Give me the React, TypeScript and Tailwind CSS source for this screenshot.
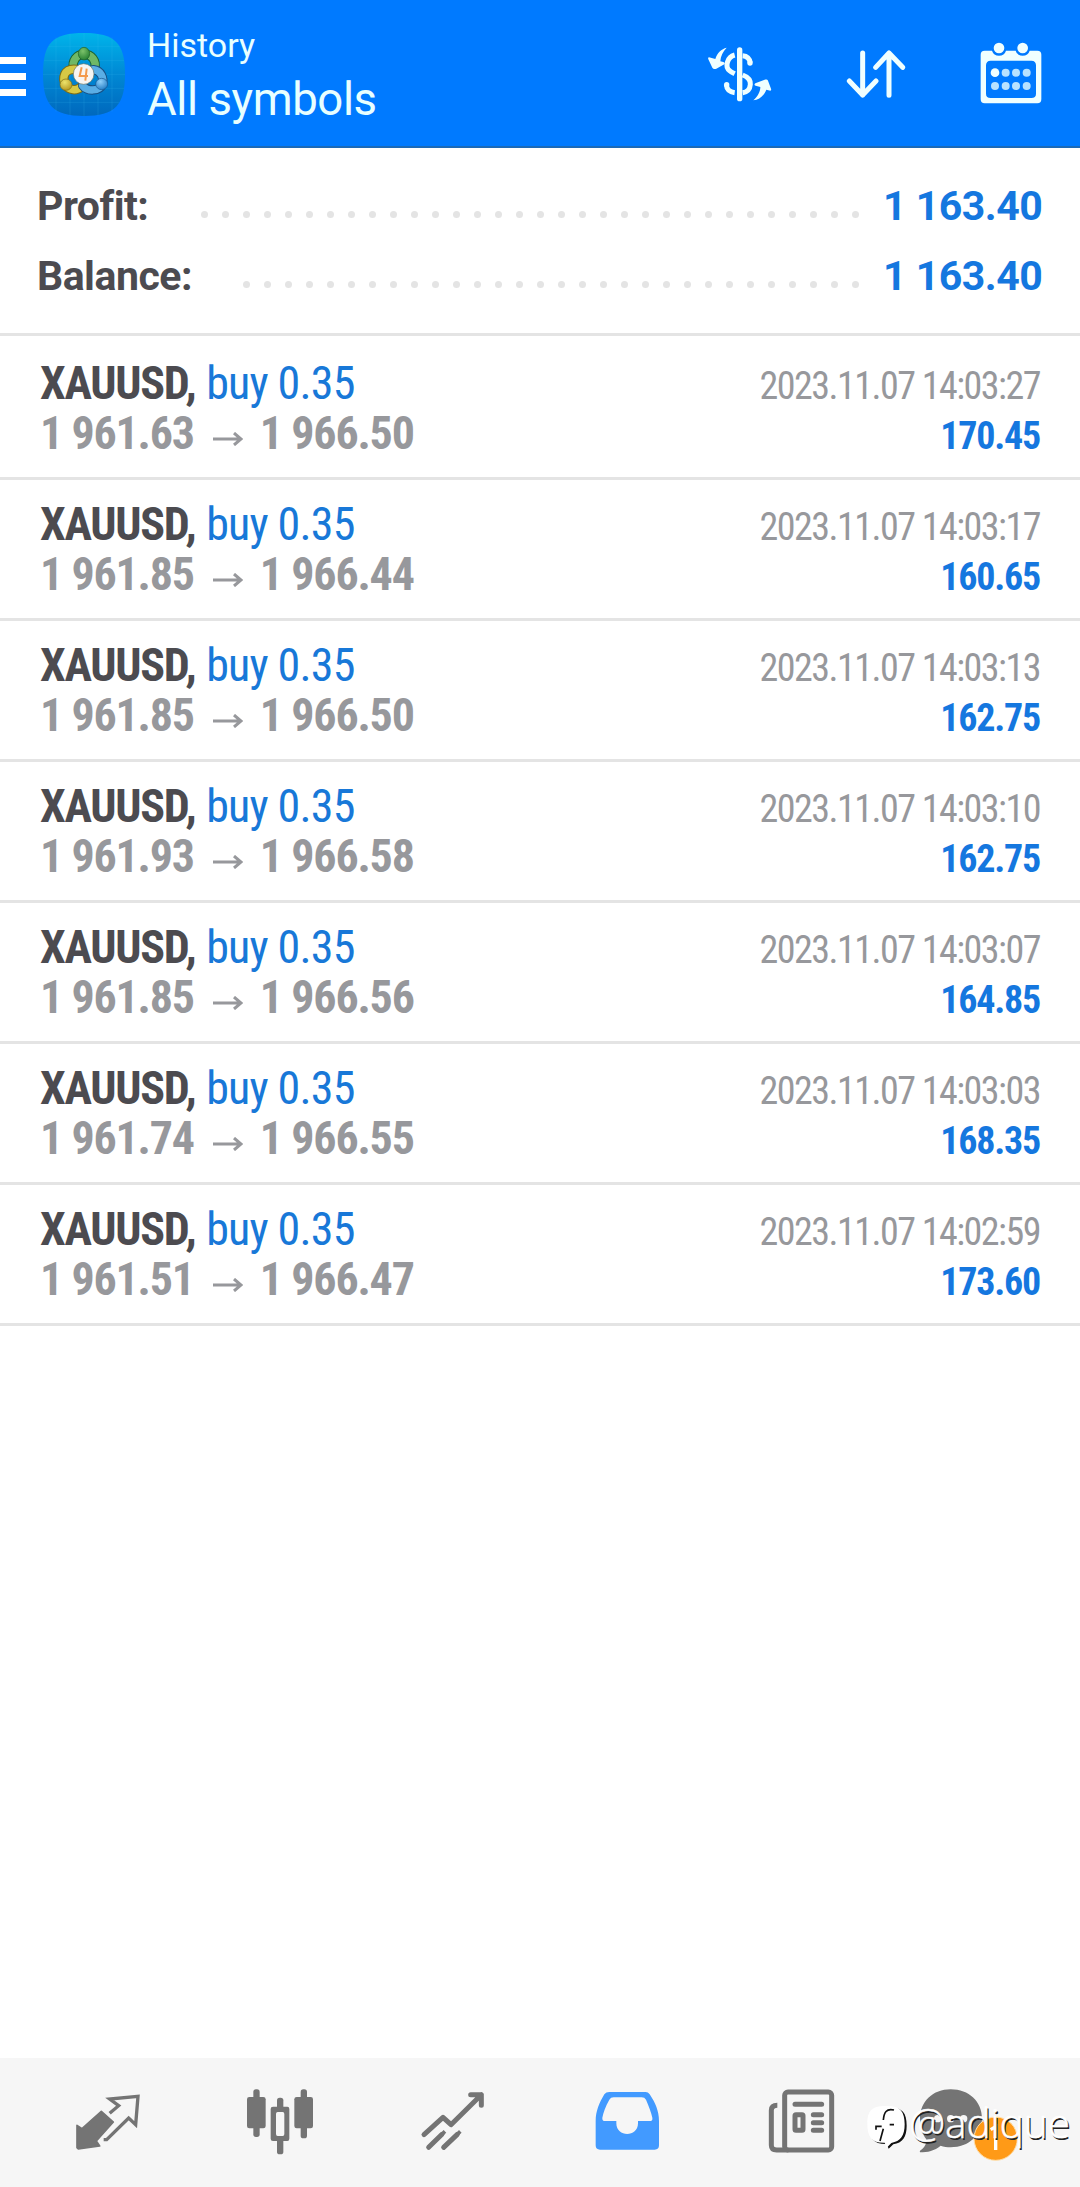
import type { ReactNode } from 'react';

interface Deal {
  open: string;
  close: string;
  time: string;
  profit: string;
}

const deals: Deal[] = [
  { open: '1 961.63', close: '1 966.50', time: '2023.11.07 14:03:27', profit: '170.45' },
  { open: '1 961.85', close: '1 966.44', time: '2023.11.07 14:03:17', profit: '160.65' },
  { open: '1 961.85', close: '1 966.50', time: '2023.11.07 14:03:13', profit: '162.75' },
  { open: '1 961.93', close: '1 966.58', time: '2023.11.07 14:03:10', profit: '162.75' },
  { open: '1 961.85', close: '1 966.56', time: '2023.11.07 14:03:07', profit: '164.85' },
  { open: '1 961.74', close: '1 966.55', time: '2023.11.07 14:03:03', profit: '168.35' },
  { open: '1 961.51', close: '1 966.47', time: '2023.11.07 14:02:59', profit: '173.60' },
];

function AppLogo() {
  return (
    <svg className="ml-[16px] h-[84px] w-[84px]" viewBox="126 96 252 252">
      <defs>
        <linearGradient id="logo-bg" x1="0" y1="0" x2="0" y2="1">
          <stop offset="0" stopColor="#00b4ea" />
          <stop offset="0.5" stopColor="#0088d4" />
          <stop offset="1" stopColor="#0068bd" />
        </linearGradient>
        <radialGradient id="logo-green" cx="0.4" cy="0.3" r="0.8">
          <stop offset="0" stopColor="#7cc26a" />
          <stop offset="1" stopColor="#1d7a2c" />
        </radialGradient>
        <radialGradient id="logo-yellow" cx="0.4" cy="0.3" r="0.8">
          <stop offset="0" stopColor="#ece36b" />
          <stop offset="1" stopColor="#b0921a" />
        </radialGradient>
        <radialGradient id="logo-blue" cx="0.4" cy="0.3" r="0.8">
          <stop offset="0" stopColor="#8fd0fa" />
          <stop offset="1" stopColor="#1b76c0" />
        </radialGradient>
      </defs>
      <path
        d="M252 99C345 99 375 129 375 222S345 348 252 348S129 316 129 222S159 99 252 99Z"
        fill="url(#logo-bg)"
      />
      <g stroke="#3cc3f0" strokeOpacity="0.25" strokeWidth="2">
        <path d="M145 139H359M132 181H372M129 223H375M132 265H372M146 307H358" />
        <path d="M168 112V335M210 101V346M252 99V348M294 101V346M336 112V335" />
      </g>
      <g fill="none" strokeLinecap="round">
        <path d="M221 205A33 33 0 1 1 284 205" stroke="#1d6330" strokeWidth="28" />
        <path d="M221 205A33 33 0 1 1 284 205" stroke="#6fb866" strokeWidth="22" />
        <path d="M229 208C190 204 186 236 197 255C207 273 231 272 241 262" stroke="#7c6c15" strokeWidth="28" />
        <path d="M229 208C190 204 186 236 197 255C207 273 231 272 241 262" stroke="#d6c945" strokeWidth="22" />
        <path d="M248 257C261 274 298 276 307 252C312 232 303 212 280 209" stroke="#174f83" strokeWidth="28" />
        <path d="M248 257C261 274 298 276 307 252C312 232 303 212 280 209" stroke="#5aaee5" strokeWidth="22" />
      </g>
      <ellipse cx="252" cy="161" rx="17" ry="19" fill="url(#logo-green)" stroke="#1c5e27" strokeWidth="2" />
      <ellipse cx="198" cy="254" rx="18" ry="17" fill="url(#logo-yellow)" stroke="#7c6c15" strokeWidth="2" />
      <ellipse cx="305" cy="252" rx="18" ry="17" fill="url(#logo-blue)" stroke="#17568f" strokeWidth="2" />
      <circle cx="251" cy="222" r="31" fill="#f7f5f2" stroke="#6b7666" strokeWidth="2" />
      <path d="M245 202L239 228H264M260 206L256 242" fill="none" stroke="#f39a4c" strokeWidth="6" />
    </svg>
  );
}

function HeaderIcons() {
  return (
    <div className="flex items-start pr-[38px] text-[#f0ffff]">
      {/* dollar with exchange arrows */}
      <svg className="h-[66px] w-[64px]" viewBox="83 64 192 198" fill="none" stroke="currentColor">
        <path d="M178 91V237" strokeWidth="16" strokeLinecap="round" />
        <path
          d="M163 106C140 112 133 142 148 153C153 158 159 160 163 162M187 108C201 109 208 117 210 130M187 166C203 172 211 181 210 194C209 208 200 217 187 219M163 219C148 217 139 208 138 195"
          strokeWidth="15"
        />
        <circle cx="209" cy="130" r="8" fill="currentColor" stroke="none" />
        <circle cx="139" cy="195" r="8" fill="currentColor" stroke="none" />
        <path
          d="M139 84C123 88 111 99 105 118L86 113C83 114 83 117 84 119L96 144C98 148 104 149 108 147L132 134C135 132 133 128 129 127L120 125C121 109 128 96 139 84Z"
          fill="currentColor"
          stroke="none"
        />
        <path
          d="M219 242C236 240 250 230 258 210L270 213C273 213 273 211 272 207L263 183C261 179 257 179 253 180L225 191C221 194 222 197 226 198L240 202C240 218 231 231 219 242Z"
          fill="currentColor"
          stroke="none"
        />
      </svg>
      <svg className="ml-[74px] h-[66px] w-[60px]" viewBox="497 64 180 198" fill="none" stroke="currentColor" strokeWidth="15" strokeLinecap="round" strokeLinejoin="round">
        <path d="M547 100V226M507 184L547 226L587 184M626 227V100M586 143L626 100L667 143" />
      </svg>
      <svg className="ml-[74px] h-[66px] w-[62px]" viewBox="898 64 186 198" fill="currentColor">
        <path
          fillRule="evenodd"
          d="M912 93H934A22 22 0 0 0 976 93H1005A22 22 0 0 0 1047 93H1070Q1082 93 1082 105V238Q1082 251 1070 251H912Q900 251 900 238V105Q900 93 912 93ZM930 123Q916 123 916 137V222Q916 235 930 235H1052Q1066 235 1066 222V137Q1066 123 1052 123Z"
        />
        <circle cx="955" cy="85" r="16" />
        <circle cx="1026" cy="85" r="16" />
        <circle cx="943" cy="159" r="13" />
        <g fill="#b8e2ff">
          <circle cx="975" cy="159" r="12" />
          <circle cx="1006" cy="159" r="12" />
          <circle cx="1038" cy="159" r="12" />
          <circle cx="943" cy="199" r="12" />
          <circle cx="975" cy="199" r="12" />
          <circle cx="1006" cy="199" r="12" />
          <circle cx="1038" cy="199" r="12" />
        </g>
      </svg>
    </div>
  );
}

function Header() {
  return (
    <header className="flex h-[148px] border-b-2 border-[#1b6ab8] bg-[#007aff]">
      <div className="flex w-[26px] flex-col gap-[9px] pt-[57px]">
        <div className="h-[7px] bg-white" />
        <div className="h-[7px] bg-white" />
        <div className="h-[7px] bg-white" />
      </div>
      <div className="pt-8">
        <AppLogo />
      </div>
      <div className="ml-[21px] pt-[25px] text-[#e8ffff]">
        <div className="h-[40px] text-[34px] leading-[40px]">History</div>
        <div className="mt-[8px] text-[45.5px] leading-[54px] tracking-[-0.4px]">All symbols</div>
      </div>
      <div className="ml-auto pt-[41px]">
        <HeaderIcons />
      </div>
    </header>
  );
}

function SummaryRow({ label, value, dots }: { label: string; value: string; dots: number }) {
  return (
    <div className="flex h-[70px] items-center pr-[39px] pl-[37px] text-[41px] leading-[48px] font-bold tracking-[-0.5px]">
      <span className="text-[#4c4b50]">{label}</span>
      <div className="mt-[17px] ml-auto flex gap-[14px]">
        {Array.from({ length: dots }, (_, i) => (
          <span key={i} className="h-[7px] w-[7px] rounded-full bg-[#e4e4e4]" />
        ))}
      </div>
      <span className="ml-[24px] w-[158px] whitespace-nowrap text-[#1577df]">{value}</span>
    </div>
  );
}

function DealRow({ deal }: { deal: Deal }) {
  return (
    <div className="flex h-[141px] justify-between border-b-[3px] border-[#e4e4e4] pt-[19px] pr-[40px] pl-[40px] font-['Roboto_Condensed','Roboto'] [font-stretch:75%]">
      <div className="whitespace-nowrap">
        <div className="h-[50px] text-[46px] leading-[50px]">
          <span className="font-bold tracking-[-1.3px] text-[#4c4b50]">XAUUSD,</span>{' '}
          <span className="tracking-[-0.8px] text-[#1878d8]">buy 0.35</span>
        </div>
        <div className="flex h-[50px] items-center text-[46px] leading-[50px] font-bold tracking-[-1.2px] text-[#97989c]">
          <span>{deal.open}</span>
          <svg className="mt-[11px] ml-[19px] h-[14px] w-[30px]" viewBox="0 0 30 14" fill="none" stroke="currentColor" strokeWidth="3">
            <path d="M0 7H27M21 1L28 7L21 13" />
          </svg>
          <span className="ml-[17px]">{deal.close}</span>
        </div>
      </div>
      <div className="text-right text-[38px] whitespace-nowrap">
        <div className="h-[50px] leading-[56px] tracking-[-1.5px] text-[#97989c]">{deal.time}</div>
        <div className="h-[50px] leading-[56px] font-bold tracking-[-1.2px] text-[#1577df]">{deal.profit}</div>
      </div>
    </div>
  );
}

function NavItem({ children }: { children: ReactNode }) {
  return <div className="flex justify-center pt-[24px] text-[#747474]">{children}</div>;
}

function NavBar() {
  return (
    <nav className="relative grid h-[129px] grid-cols-6 bg-[#f6f6f6] px-[20px]">
      <NavItem>
        <svg className="h-20 w-20" viewBox="80 96 240 240" fill="none" stroke="currentColor">
          <path d="M183 184L219 216L168 273L178 288L114 297L110 293V226L125 236Z" fill="currentColor" strokeWidth="5" strokeLinejoin="round" />
          <path d="M208 190L235 167L208 147L293 139L286 224L265 204L199 269H190" strokeWidth="10" />
        </svg>
      </NavItem>
      <NavItem>
        <svg className="h-20 w-20" viewBox="600 96 240 240" fill="currentColor">
          <rect x="640" y="118" width="19" height="143" rx="8" />
          <rect x="621" y="141" width="56" height="94" rx="7" />
          <rect x="782" y="118" width="19" height="147" rx="8" />
          <rect x="763" y="141" width="56" height="94" rx="7" />
          <rect x="711" y="143" width="19" height="40" rx="8" />
          <rect x="711" y="260" width="19" height="53" rx="8" />
          <path fillRule="evenodd" d="M699 170H742Q748 170 748 177V266Q748 273 742 273H699Q692 273 692 266V177Q692 170 699 170ZM713 186Q708 186 708 192V252Q708 258 713 258H728Q733 258 733 252V192Q733 186 728 186Z" />
        </svg>
      </NavItem>
      <NavItem>
        <svg className="h-20 w-20" viewBox="100 96 240 240" fill="none" stroke="currentColor" strokeWidth="15" strokeLinecap="round" strokeLinejoin="round">
          <path d="M133 254L190 202L214 224L305 134M273 134H305V166" />
          <path d="M147 292L187 253M192 292L233 253" />
          <path d="M191 249L192 248M237 249L238 248" strokeLinecap="square" strokeWidth="11" />
        </svg>
      </NavItem>
      <NavItem>
        <svg className="h-20 w-20" viewBox="620 96 240 240">
          <path
            fill="#429aff"
            fillRule="evenodd"
            d="M687 126H796Q803 126 808 133C825 158 836 184 836 213V286Q836 299 823 299H659Q646 299 646 286V213C646 184 657 158 672 133Q677 126 687 126ZM700 142Q691 142 687 149C675 170 669 188 666 203Q665 213 674 213H708V220C708 263 773 263 773 220V213H808Q818 213 816 203C813 188 805 167 797 149Q793 142 784 142Z"
          />
        </svg>
      </NavItem>
      <NavItem>
        <svg className="h-20 w-20" viewBox="60 96 240 240" fill="none" stroke="currentColor" strokeWidth="15">
          <rect x="134" y="126" width="141" height="174" rx="10" />
          <path d="M112 166Q94 166 94 181V286Q94 300 110 300H145" />
          <path d="M165 163H245M220 194H245M220 218H245M220 241H245" strokeLinecap="round" />
          <rect x="165" y="194" width="24" height="47" rx="3" />
        </svg>
      </NavItem>
      <NavItem>
        <svg className="h-20 w-[108px]" viewBox="538 96 324 240">
          <path
            fill="currentColor"
            d="M633 118C688 118 727 155 727 205S688 292 633 292C622 292 612 290 603 287C585 302 563 307 541 307C539 304 542 301 547 298C557 289 561 279 560 268C548 252 541 231 541 205C541 155 580 118 633 118Z"
          />
          <circle cx="594" cy="206" r="11" fill="#f6f6f6" />
          <circle cx="633" cy="206" r="11" fill="#f6f6f6" />
          <circle cx="672" cy="206" r="11" fill="#f6f6f6" />
          <circle cx="768" cy="266" r="65" fill="#ff9a17" stroke="#ffdfab" strokeWidth="3" />
          <path d="M753 239L768 230V300" fill="none" stroke="#fff" strokeWidth="10" />
        </svg>
      </NavItem>
      {/* author mark floating over the tab bar */}
      <div className="absolute top-[40px] right-[10px] flex items-start">
        <svg className="mt-[6px] h-[46px] w-[42px]" viewBox="375 166 126 138">
          <path
            d="M437 177C480 175 494 191 494 231C494 265 482 282 454 287L440 300L434 286C396 287 381 270 381 229C381 191 394 177 437 177Z"
            fill="#111"
          />
          <path
            d="M430 172C474 170 488 187 488 227C488 261 476 278 448 283L434 297L428 282C390 283 376 266 376 225C376 187 389 172 430 172Z"
            fill="#fff"
          />
          <path d="M456 184C433 178 426 192 424 214M402 243V233H419M443 228H456M424 240L414 277" fill="none" stroke="#111" strokeWidth="5" />
        </svg>
        <span className="font-['Open_Sans'] text-[40.5px] leading-[50px] font-light text-white [-webkit-text-stroke:0.5px_#fff] [text-shadow:1.5px_1.5px_0.5px_#222]">
          @adique
        </span>
      </div>
    </nav>
  );
}

export default function App() {
  return (
    <div className="flex h-[2187px] w-[1080px] flex-col overflow-hidden bg-white font-['Roboto',sans-serif]">
      <Header />
      <section className="h-[188px] border-b-[3px] border-[#e4e4e4] pt-[23px]">
        <SummaryRow label="Profit:" value="1 163.40" dots={32} />
        <SummaryRow label="Balance:" value="1 163.40" dots={30} />
      </section>
      <main className="flex-1 pt-[3px]">
        {deals.map((deal) => (
          <DealRow key={deal.time} deal={deal} />
        ))}
      </main>
      <NavBar />
    </div>
  );
}
